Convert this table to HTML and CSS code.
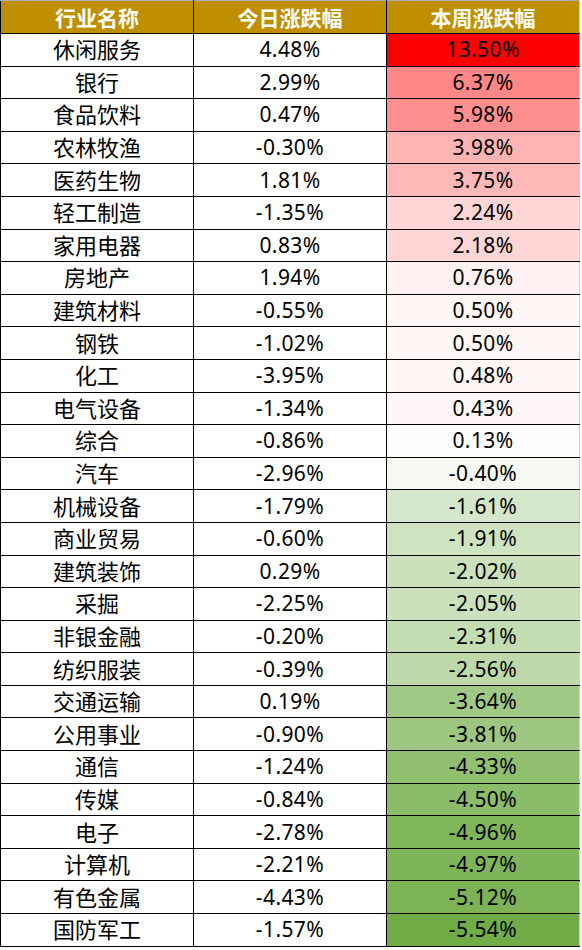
FILE: index.html
```html
<!DOCTYPE html>
<html lang="zh-CN">
<head>
  <meta charset="UTF-8" />
  <meta name="viewport" content="width=device-width, initial-scale=1.0"/>
  <title>行业涨跌幅</title>
  <link rel="stylesheet" href="styles.css">
</head>
<body>

  <table class="sector-table">
    <thead>
      <tr>
        <th>行业名称</th>
        <th>今日涨跌幅</th>
        <th>本周涨跌幅</th>
      </tr>
    </thead>
    <tbody id="rows"></tbody>
  </table>

  <script>
    const data = [
      ['休闲服务', 4.48, 13.50],
      ['银行', 2.99, 6.37],
      ['食品饮料', 0.47, 5.98],
      ['农林牧渔', -0.30, 3.98],
      ['医药生物', 1.81, 3.75],
      ['轻工制造', -1.35, 2.24],
      ['家用电器', 0.83, 2.18],
      ['房地产', 1.94, 0.76],
      ['建筑材料', -0.55, 0.50],
      ['钢铁', -1.02, 0.50],
      ['化工', -3.95, 0.48],
      ['电气设备', -1.34, 0.43],
      ['综合', -0.86, 0.13],
      ['汽车', -2.96, -0.40],
      ['机械设备', -1.79, -1.61],
      ['商业贸易', -0.60, -1.91],
      ['建筑装饰', 0.29, -2.02],
      ['采掘', -2.25, -2.05],
      ['非银金融', -0.20, -2.31],
      ['纺织服装', -0.39, -2.56],
      ['交通运输', 0.19, -3.64],
      ['公用事业', -0.90, -3.81],
      ['通信', -1.24, -4.33],
      ['传媒', -0.84, -4.50],
      ['电子', -2.78, -4.96],
      ['计算机', -2.21, -4.97],
      ['有色金属', -4.43, -5.12],
      ['国防军工', -1.57, -5.54]
    ];

    const weekly = data.map(d => d[2]);
    const max = Math.max(...weekly);
    const min = Math.min(...weekly);

    // three colour scale: green (min) -> white (0) -> red (max)
    function scaleColor(v) {
      let from, to, t;
      if (v >= 0) {
        from = [255, 255, 255]; to = [255, 0, 0]; t = v / max;
      } else {
        from = [255, 255, 255]; to = [112, 173, 71]; t = v / min;
      }
      const c = from.map((f, i) => Math.round(f + (to[i] - f) * t));
      return `rgb(${c[0]}, ${c[1]}, ${c[2]})`;
    }

    const tbody = document.getElementById('rows');
    data.forEach(([name, today, week]) => {
      const tr = document.createElement('tr');
      tr.innerHTML = `
        <td>${name}</td>
        <td>${today.toFixed(2)}%</td>
        <td style="background-color: ${scaleColor(week)}">${week.toFixed(2)}%</td>
      `;
      tbody.appendChild(tr);
    });
  </script>
</body>
</html>
```

FILE: styles.css
```css
* {
  box-sizing: border-box;
}

body {
  margin: 0;
  background: #fff;
  font-family: 'Noto Sans', 'Noto Sans CJK SC', sans-serif;
  color: #000;
}

.sector-table {
  width: 580px;
  table-layout: fixed;
  border-collapse: collapse;
}

.sector-table th,
.sector-table td {
  border: 1px solid #000;
  text-align: center;
  padding: 0;
  white-space: nowrap;
}

.sector-table th {
  height: 33px;
  background: #bf8f00;
  color: #fff;
  font-family: 'Noto Sans CJK SC', sans-serif;
  font-weight: bold;
  font-size: 21px;
  line-height: 1;
  border-top: 1px solid #b0b0b0;
}

.sector-table td {
  height: 32.6px;
  font-size: 21px;
  line-height: 1;
  letter-spacing: 0.4px;
}

.sector-table td:first-child {
  font-family: 'Noto Sans CJK SC', sans-serif;
  font-size: 22px;
  letter-spacing: 0;
  padding-bottom: 3px;
}

.sector-table th:last-child,
.sector-table td:last-child {
  border-right-color: #d0d0d0;
}
```
